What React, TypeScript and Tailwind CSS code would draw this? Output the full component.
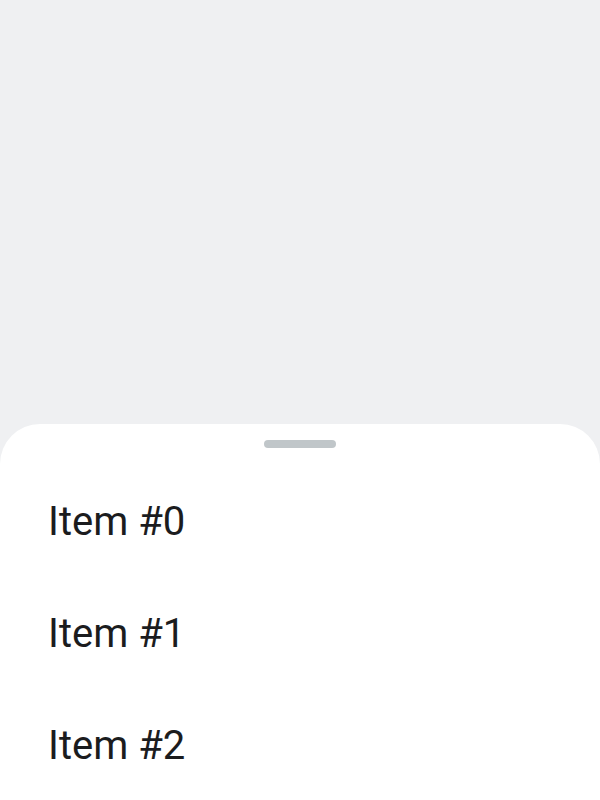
export default function App() {
  const items = ["Item #0", "Item #1", "Item #2"];
  return (
    <div className="h-[800px] w-[600px] flex flex-col bg-[#eff0f2] overflow-hidden" style={{ fontFamily: "Roboto, sans-serif" }}>
      <div className="flex-1" />
      <div className="h-[376px] bg-white rounded-t-[40px] flex flex-col">
        <div className="flex justify-center pt-4">
          <div className="h-2 w-[72px] rounded-full bg-[#c0c6c9]" />
        </div>
        <div className="mt-[18px] flex flex-col">
          {items.map((t) => (
            <div key={t} className="h-[112px] flex items-center px-12 text-[40px] text-[#1b1c1e]">
              {t}
            </div>
          ))}
        </div>
      </div>
    </div>
  );
}
